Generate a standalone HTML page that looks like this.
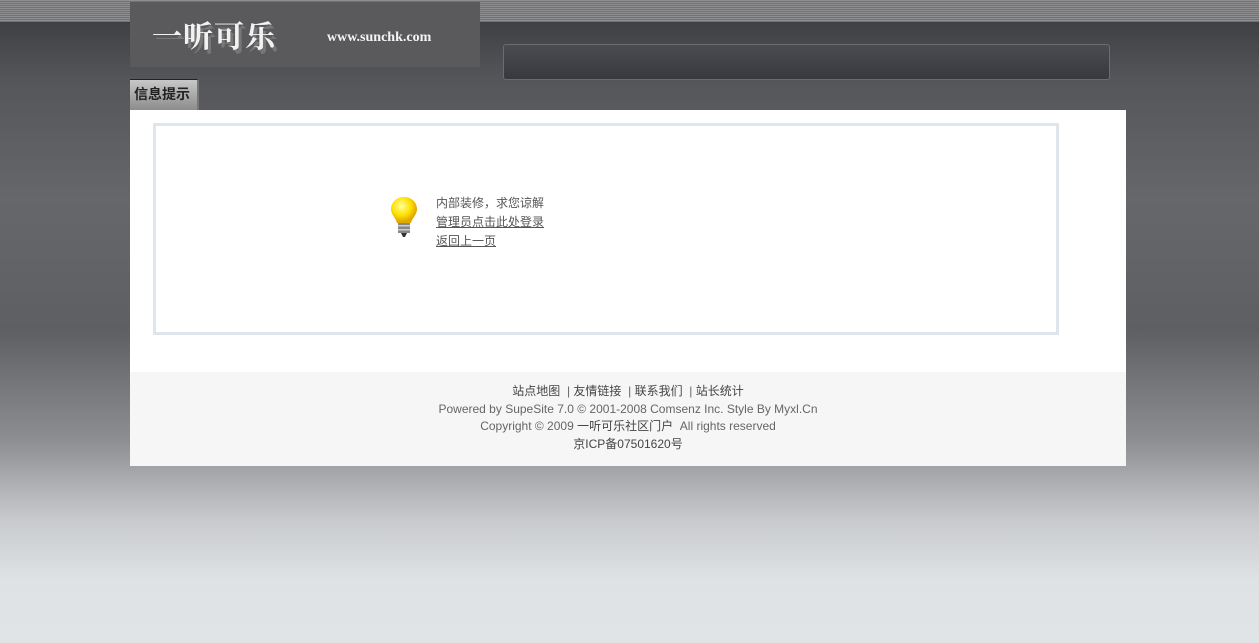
<!DOCTYPE html>
<html><head><meta charset="utf-8"><style>
body{margin:0;width:1259px;height:643px;overflow:hidden;font-family:"Liberation Sans","Noto Sans CJK SC",sans-serif;font-size:12px;
background:linear-gradient(#3f4043 22px,#55565a 80px,#66676b 200px,#5e5f63 330px,#8d8e92 440px,#c8cacd 520px,#dfe2e5 580px,#e1e4e7 643px);position:relative}
.top{position:absolute;left:0;top:0;width:1259px;height:22px;background:repeating-linear-gradient(#8e8e90 0 1px,#727274 1px 2px);}
.logo{position:absolute;left:130px;top:2px;width:350px;height:65px;background:#5a5a5c;}
.logo .cn{position:absolute;left:22px;top:10px;font:bold 30px "Noto Serif CJK SC",serif;color:#f2f2f2;letter-spacing:1px;text-shadow:3px 4px 0 #777}
.logo .en{position:absolute;left:197px;top:28px;font:bold 14px "Liberation Serif",serif;color:#f4f4f4}
.bar{position:absolute;left:503px;top:44px;width:605px;height:34px;background:linear-gradient(#4a4c52,#37393f);border:1px solid #6a6c70;border-radius:3px;}
.tab{position:absolute;left:130px;top:79px;width:67px;height:30px;background:linear-gradient(#c8c8c8,#8c8c8c);border-top:1px solid #222;border-right:2px solid #777;font-weight:bold;font-size:14px;color:#222;line-height:28px;text-indent:4px}
.main{position:absolute;left:130px;top:110px;width:996px;height:262px;background:#fff}
.box{position:absolute;left:23px;top:13px;width:900px;height:206px;border:3px solid #dfe5ec}
.msg{position:absolute;left:280px;top:68px;color:#555;line-height:19px}
.msg a{color:#555;text-decoration:underline}
.bulb{position:absolute;left:233px;top:70px}
.foot{position:absolute;left:130px;top:372px;width:996px;height:94px;background:#f6f6f6;text-align:center;color:#666;line-height:17.5px;padding-top:11px;box-sizing:border-box}
.foot .l{color:#444}
</style></head><body>
<div class="top"></div>
<div class="logo"><span class="cn">一听可乐</span><span class="en">www.sunchk.com</span></div>
<div class="bar"></div>
<div class="tab">信息提示</div>
<div class="main"><div class="box">
<svg class="bulb" width="30" height="44" viewBox="0 0 30 44"><defs><radialGradient id="g" cx="40%" cy="35%" r="60%"><stop offset="0" stop-color="#ffff9a"/><stop offset="0.6" stop-color="#ffe000"/><stop offset="1" stop-color="#e0a800"/></radialGradient></defs>
<path d="M15 1C7 1 2 7 2 13c0 6 5 9 6 14h14c1-5 6-8 6-14C28 7 23 1 15 1z" fill="url(#g)"/>
<rect x="9" y="27" width="12" height="10" fill="#888"/><rect x="9" y="29" width="12" height="1.5" fill="#ccc"/><rect x="9" y="33" width="12" height="1.5" fill="#ccc"/>
<path d="M12 37h6l-2 4h-2z" fill="#333"/></svg>
<div class="msg">内部装修，求您谅解<br><a>管理员点击此处登录</a><br><a>返回上一页</a></div>
</div></div>
<div class="foot"><span class="l">站点地图</span> &nbsp;| <span class="l">友情链接</span> &nbsp;| <span class="l">联系我们</span> &nbsp;| <span class="l">站长统计</span><br>Powered by SupeSite 7.0 © 2001-2008 Comsenz Inc. Style By Myxl.Cn<br>Copyright © 2009 <span class="l">一听可乐社区门户</span> &nbsp;All rights reserved<br><span class="l">京ICP备07501620号</span></div>
</body></html>
